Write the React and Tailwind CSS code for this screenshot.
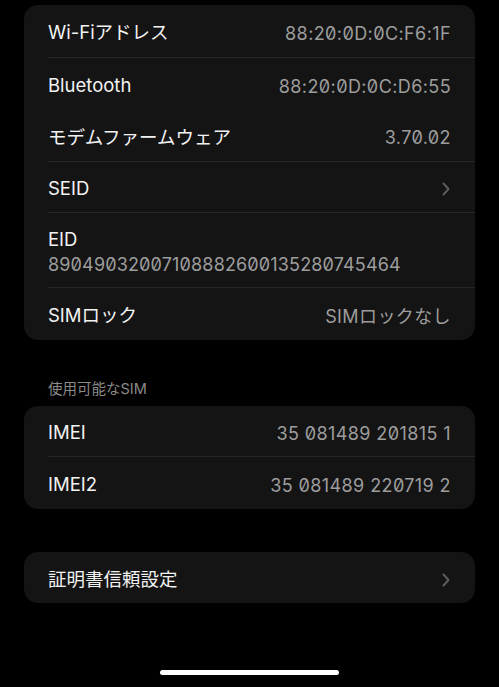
import React from "react";

const FONT = "font-['Inter','Noto_Sans_CJK_JP',sans-serif]";

function Chevron() {
  return (
    <svg width="10" height="16" viewBox="0 0 10 16" fill="none">
      <path d="M2.5 2.5 L7.5 8 L2.5 13.5" stroke="#5c5c5c" strokeWidth="2" strokeLinecap="round" strokeLinejoin="round" />
    </svg>
  );
}

function Row({ label, value, chevron, divider, h = "h-[52px]" }) {
  return (
    <div className="pl-6">
      <div className={`flex items-center justify-between pr-6 pt-[4px] ${h} ${divider ? "border-b border-[#262626]" : ""}`}>
        <span className="text-[18.5px] text-[#f2f2f2]">{label}</span>
        {value && <span className="text-[18px] tracking-[0.4px] text-[#9d9d9d] [font-feature-settings:'zero']">{value}</span>}
        {chevron && <Chevron />}
      </div>
    </div>
  );
}

export default function App() {
  return (
    <div className={`w-[499px] h-[687px] bg-black overflow-hidden flex flex-col ${FONT}`}>
      <div className="pt-[5px] px-6">
        <div className="bg-[#141414] rounded-[14px]">
          <Row label="Wi-Fiアドレス" value="88:20:0D:0C:F6:1F" divider h="h-[53px]" />
          <Row label="Bluetooth" value="88:20:0D:0C:D6:55" />
          <Row label="モデムファームウェア" value="3.70.02" divider h="h-[52px]" />
          <Row label="SEID" chevron divider h="h-[51px]" />
          <div className="pl-6">
            <div className="h-[75px] border-b border-[#262626] flex flex-col justify-center pr-6 pt-[4px]">
              <span className="text-[18.5px] text-[#f2f2f2] leading-[26px]">EID</span>
              <span className="text-[18px] tracking-[0.15px] text-[#9d9d9d] leading-[26px] [font-feature-settings:'zero']">89049032007108882600135280745464</span>
            </div>
          </div>
          <Row label="SIMロック" value="SIMロックなし" h="h-[52px]" />
        </div>
      </div>

      <div className="px-12 pt-[40px] pb-[8px] text-[14.5px] text-[#8a8a8a] leading-[18px]">使用可能なSIM</div>

      <div className="px-6">
        <div className="bg-[#141414] rounded-[14px]">
          <Row label="IMEI" value="35 081489 201815 1" divider h="h-[51px]" />
          <Row label="IMEI2" value="35 081489 220719 2" h="h-[52px]" />
        </div>
      </div>

      <div className="px-6 pt-[43px]">
        <div className="bg-[#141414] rounded-[14px]">
          <Row label="証明書信頼設定" chevron h="h-[51px]" />
        </div>
      </div>

      <div className="flex-1" />
      <div className="flex justify-center pb-[12px]">
        <div className="w-[179px] h-[5px] rounded-full bg-white" />
      </div>
    </div>
  );
}
